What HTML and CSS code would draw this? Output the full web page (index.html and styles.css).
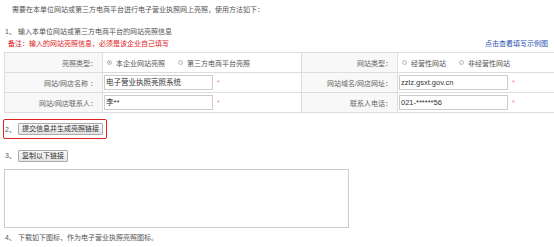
FILE: index.html
```html
<!DOCTYPE html>
<html lang="zh-CN">
<head>
    <meta charset="UTF-8">
    <meta name="viewport" content="width=device-width, initial-scale=1.0">
    <title>电子营业执照亮照</title>
    <link rel="stylesheet" href="styles.css">
</head>
<body>
<div class="page">
    <p class="intro">需要在本单位网站或第三方电商平台进行电子营业执照网上亮照，使用方法如下：</p>

    <p class="step"><span class="num">1、</span>输入本单位网站或第三方电商平台的网站亮照信息</p>
    <div class="note-row">
        <span class="note">备注：输入的网站亮照信息，必须是该企业自己填写</span>
        <a class="example-link" href="#">点击查看填写示例图</a>
    </div>

    <table class="info-table">
        <tr>
            <td class="label col-a">亮照类型：</td>
            <td class="value col-b">
                <label class="radio"><span class="dot checked"></span>本企业网站亮照</label>
                <label class="radio"><span class="dot"></span>第三方电商平台亮照</label>
            </td>
            <td class="label col-c">网站类型：</td>
            <td class="value col-d">
                <label class="radio"><span class="dot"></span>经营性网站</label>
                <label class="radio"><span class="dot"></span>非经营性网站</label>
            </td>
        </tr>
        <tr>
            <td class="label">网站/网店名称 ：</td>
            <td class="value"><span class="field">电子营业执照亮照系统</span><span class="req">*</span></td>
            <td class="label">网站域名/网店网址：</td>
            <td class="value"><span class="field">zzlz.gsxt.gov.cn</span><span class="req">*</span></td>
        </tr>
        <tr>
            <td class="label">网站/网店联系人：</td>
            <td class="value"><span class="field">李**</span><span class="req">*</span></td>
            <td class="label">联系人电话：</td>
            <td class="value"><span class="field">021-******56</span><span class="req">*</span></td>
        </tr>
    </table>

    <div class="step-box">
        <span class="num">2、</span>
        <button class="btn">提交信息并生成亮照链接</button>
    </div>

    <div class="step step-3">
        <span class="num">3、</span>
        <button class="btn">复制以下链接</button>
    </div>

    <textarea class="link-area"></textarea>

    <p class="step step-4"><span class="num">4、</span>下载如下图标，作为电子营业执照亮照图标。</p>
</div>
</body>
</html>
```

FILE: styles.css
```css
body {
    margin: 0;
    background-color: #ffffff;
    font-family: "Liberation Sans", "Noto Sans CJK SC", sans-serif;
    color: #555555;
    font-size: 7px;
}

.page {
    padding: 0 6px 0 4px;
}

p {
    margin: 0;
}

.intro {
    height: 20px;
    line-height: 20px;
    padding-left: 8px;
}

.step {
    margin-top: 6px;
    height: 12px;
    line-height: 12px;
}

.num {
    display: inline-block;
    width: 13px;
    margin-left: 1px;
}

.note-row {
    display: flex;
    justify-content: space-between;
    height: 12px;
    line-height: 12px;
    padding-left: 4px;
}

.note {
    color: #e02020;
}

.example-link {
    color: #2a4fb0;
    text-decoration: none;
}

.info-table {
    margin-top: 2px;
    width: 544px;
    border-collapse: collapse;
    table-layout: fixed;
}

.info-table td {
    border: 1px solid #dddddd;
    height: 19px;
    padding: 0;
}

.col-a { width: 92px; }
.col-b { width: 197px; }
.col-c { width: 90px; }
.col-d { width: 161px; }

.label {
    background-color: #f8f8f8;
    text-align: right;
    padding-right: 5px !important;
    color: #666666;
}

.value {
    padding-left: 1px !important;
    background-color: #ffffff;
}

.radio {
    display: inline-flex;
    align-items: center;
    margin-left: 3px;
    margin-right: 8px;
}

.dot {
    width: 5px;
    height: 5px;
    border: 1px solid #bbbbbb;
    border-radius: 50%;
    background-color: #f2f2f2;
    margin-right: 4px;
    box-sizing: border-box;
    position: relative;
}

.dot.checked::after {
    content: "";
    position: absolute;
    left: 1px;
    top: 1px;
    width: 1px;
    height: 1px;
    border-radius: 50%;
    background-color: #555555;
}

.field {
    display: inline-block;
    vertical-align: middle;
    width: 106px;
    height: 13px;
    line-height: 13px;
    border: 1px solid #cccccc;
    padding-left: 1px;
    font-size: 7.5px;
    color: #333333;
    background-color: #ffffff;
}

.req {
    display: inline-block;
    vertical-align: middle;
    margin-left: 4px;
    color: #f08080;
    font-size: 7px;
}

.step-box {
    margin-top: 6px;
    margin-left: -1px;
    width: 102px;
    height: 18px;
    border: 1.5px solid #dd2222;
    border-radius: 2px;
    display: flex;
    align-items: center;
}

.btn {
    height: 12px;
    padding: 0 3px;
    font-family: inherit;
    font-size: 7px;
    line-height: 10px;
    color: #333333;
    background: linear-gradient(#fafafa, #e4e4e4);
    border: 1px solid #aaaaaa;
    border-radius: 1px;
}

.step-3 {
    margin-top: 11px;
    display: flex;
    align-items: center;
}

.link-area {
    display: block;
    margin-top: 7px;
    width: 345px;
    height: 59px;
    box-sizing: border-box;
    border: 1px solid #cccccc;
    resize: none;
    padding: 0;
}

.step-4 {
    margin-top: 4px;
}
```
